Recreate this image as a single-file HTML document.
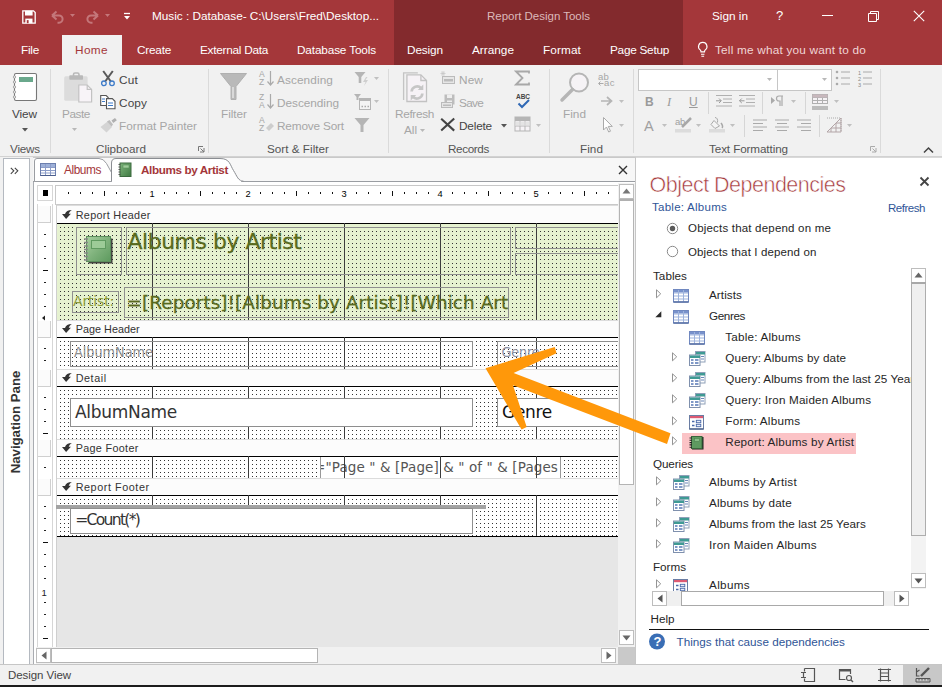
<!DOCTYPE html><html><head><meta charset="utf-8"><title>Access</title><style>
html,body{margin:0;padding:0}
body{width:942px;height:687px;position:relative;overflow:hidden;background:#fff;font-family:"Liberation Sans",sans-serif}
body div,body span,body svg{position:absolute;white-space:nowrap;display:block}
</style></head><body>
<div style="left:0px;top:0px;width:942px;height:65px;background:#a4373a;"></div>
<div style="left:394px;top:0px;width:289px;height:65px;background:#832a2d;"></div>
<div style="left:62px;top:35px;width:60px;height:30px;background:#f1f1f1;"></div>
<svg style="left:22px;top:10px;" width="14" height="14" viewBox="0 0 14 14"><path d="M.8 .8h10.700l1.700 1.700v10.700H.8z" fill="none" stroke="#fff" stroke-width="1.300"/><rect x="3" y=".8" width="7.600" height="4.700" fill="#fff"/><rect x="3.300" y="8.600" width="7.200" height="4.600" fill="#fff"/><rect x="4.800" y="10.100" width="1.800" height="3.100" fill="#a4373a"/></svg>
<svg style="left:50px;top:8.5px;" width="15" height="15" viewBox="0 0 15 15"><path d="M2 6.5 L6.5 2.5 M2 6.5 L6.5 10.5 M2.3 6.5 H9 A3.6 3.6 0 0 1 9 13.7 H7.5" fill="none" stroke="#c4777a" stroke-width="2"/></svg>
<svg style="left:85px;top:8.5px;" width="15" height="15" viewBox="0 0 15 15"><path d="M13 6.5 L8.5 2.5 M13 6.5 L8.5 10.5 M12.7 6.5 H6 A3.6 3.6 0 0 0 6 13.7 H7.5" fill="none" stroke="#c4777a" stroke-width="2"/></svg>
<svg style="left:70px;top:14px;" width="6" height="4" viewBox="0 0 6 4"><path d="M0 0h5L2.5 3z" fill="#c4777a"/></svg>
<svg style="left:105px;top:14px;" width="6" height="4" viewBox="0 0 6 4"><path d="M0 0h5L2.5 3z" fill="#c4777a"/></svg>
<svg style="left:123px;top:12px;" width="8" height="8" viewBox="0 0 8 8"><path d="M1 1.5h6" stroke="#fff" stroke-width="1.3"/><path d="M1 4h6L4 7.5z" fill="#fff"/></svg>
<span style="left:152px;top:7.41px;font:400 11.8px/18px 'Liberation Sans',sans-serif;color:#fff;letter-spacing:-0.029px;">Music : Database- C:\Users\Fred\Desktop...</span>
<span style="left:487px;top:8.02px;font:400 11.5px/17px 'Liberation Sans',sans-serif;color:#dcb9ba;letter-spacing:-0.018px;">Report Design Tools</span>
<span style="left:712px;top:7.41px;font:400 11.8px/18px 'Liberation Sans',sans-serif;color:#fff;letter-spacing:-0.011px;">Sign in</span>
<span style="left:776px;top:6.00px;font:400 13px/20px 'Liberation Sans',sans-serif;color:#fff;">?</span>
<svg style="left:822px;top:9px;" width="12" height="12" viewBox="0 0 12 12"><path d="M0 6.5h11" stroke="#fff" stroke-width="1"/></svg>
<svg style="left:867.5px;top:9.5px;" width="12" height="12" viewBox="0 0 12 12"><path d="M0.5 3.5h8v8h-8z M2.5 3.5v-2h8v8h-2" fill="none" stroke="#fff" stroke-width="1"/></svg>
<svg style="left:913px;top:9.5px;" width="12" height="12" viewBox="0 0 12 12"><path d="M.8 .8l10.400 10.400M11.200 .8L.8 11.200" stroke="#fff" stroke-width="1.100"/></svg>
<span style="left:21px;top:40.91px;font:400 11.8px/18px 'Liberation Sans',sans-serif;color:#fff;letter-spacing:-0.254px;">File</span>
<span style="left:75px;top:40.91px;font:400 11.8px/18px 'Liberation Sans',sans-serif;color:#a4373a;letter-spacing:0.381px;">Home</span>
<span style="left:137px;top:40.91px;font:400 11.8px/18px 'Liberation Sans',sans-serif;color:#fff;letter-spacing:-0.236px;">Create</span>
<span style="left:200px;top:40.91px;font:400 11.8px/18px 'Liberation Sans',sans-serif;color:#fff;letter-spacing:-0.269px;">External Data</span>
<span style="left:297px;top:40.91px;font:400 11.8px/18px 'Liberation Sans',sans-serif;color:#fff;letter-spacing:-0.152px;">Database Tools</span>
<span style="left:407px;top:40.91px;font:400 11.8px/18px 'Liberation Sans',sans-serif;color:#fff;letter-spacing:-0.122px;">Design</span>
<span style="left:472px;top:40.91px;font:400 11.8px/18px 'Liberation Sans',sans-serif;color:#fff;letter-spacing:0.003px;">Arrange</span>
<span style="left:543px;top:40.91px;font:400 11.8px/18px 'Liberation Sans',sans-serif;color:#fff;letter-spacing:0.105px;">Format</span>
<span style="left:610px;top:40.91px;font:400 11.8px/18px 'Liberation Sans',sans-serif;color:#fff;letter-spacing:-0.267px;">Page Setup</span>
<svg style="left:697px;top:41px;" width="12" height="18" viewBox="0 0 12 18"><path transform="scale(1.150)" d="M5 1.2a3.6 3.6 0 0 1 2.2 6.5c-.5.5-.7 1-.7 1.8h-3c0-.8-.2-1.3-.7-1.8A3.6 3.6 0 0 1 5 1.200z M3.5 11.500h3 M3.800 13.300h2.400" fill="none" stroke="#fff" stroke-width="1"/></svg>
<span style="left:715px;top:40.91px;font:400 11.8px/18px 'Liberation Sans',sans-serif;color:#f0d5d6;letter-spacing:0.200px;">Tell me what you want to do</span>
<div style="left:0px;top:65px;width:942px;height:91px;background:#f1f1f1;"></div>
<div style="left:0px;top:156px;width:942px;height:1px;background:#d2d2d2;"></div>
<div style="left:50px;top:69px;width:1px;height:84px;background:#dadada;"></div>
<div style="left:208px;top:69px;width:1px;height:84px;background:#dadada;"></div>
<div style="left:388px;top:69px;width:1px;height:84px;background:#dadada;"></div>
<div style="left:549px;top:69px;width:1px;height:84px;background:#dadada;"></div>
<div style="left:633px;top:69px;width:1px;height:84px;background:#dadada;"></div>
<div style="left:880px;top:69px;width:1px;height:84px;background:#dadada;"></div>
<span style="left:10px;top:140.25px;font:400 11.7px/18px 'Liberation Sans',sans-serif;color:#555;letter-spacing:-0.200px;">Views</span>
<span style="left:96px;top:140.25px;font:400 11.7px/18px 'Liberation Sans',sans-serif;color:#555;letter-spacing:-0.009px;">Clipboard</span>
<span style="left:267px;top:140.25px;font:400 11.7px/18px 'Liberation Sans',sans-serif;color:#555;letter-spacing:0.019px;">Sort &amp; Filter</span>
<span style="left:448px;top:140.25px;font:400 11.7px/18px 'Liberation Sans',sans-serif;color:#555;letter-spacing:-0.367px;">Records</span>
<span style="left:580px;top:140.25px;font:400 11.7px/18px 'Liberation Sans',sans-serif;color:#555;letter-spacing:0.060px;">Find</span>
<span style="left:709px;top:140.25px;font:400 11.7px/18px 'Liberation Sans',sans-serif;color:#555;letter-spacing:-0.108px;">Text Formatting</span>
<svg style="left:12px;top:72px;" width="26" height="30" viewBox="0 0 26 30"><rect x="2.500" y="1.500" width="22" height="27" rx="1.500" fill="#fff" stroke="#777" stroke-width="1.100"/><rect x="7" y="5" width="14" height="5" fill="#6aa88c"/><g fill="#f1f1f1" stroke="#8a8a8a" stroke-width=".7"><circle cx="2.500" cy="5" r="1.200"/><circle cx="2.500" cy="10" r="1.200"/><circle cx="2.500" cy="15" r="1.200"/><circle cx="2.500" cy="20" r="1.200"/><circle cx="2.500" cy="25" r="1.200"/></g></svg>
<span style="left:12px;top:105.21px;font:400 11.8px/18px 'Liberation Sans',sans-serif;color:#444;letter-spacing:-0.091px;">View</span>
<svg style="left:21.5px;top:128px;" width="7" height="4" viewBox="0 0 7 4"><path d="M0 0h6L3 3.500z" fill="#555"/></svg>
<svg style="left:62px;top:72px;" width="32" height="32" viewBox="0 0 32 32"><rect x="2.200" y="4.200" width="23.400" height="24.500" rx="1.500" fill="#dcdcdc"/><rect x="7.300" y="3.200" width="13.700" height="4.600" rx=".8" fill="#b9b9b9"/><path d="M11.500 4V2.500q0-1.500 1.500-1.500h2.500q1.500 0 1.500 1.500V4" fill="none" stroke="#b9b9b9" stroke-width="1.600"/><path d="M16.800 13h8.400l4.400 4.400v12.600h-12.800z" fill="#f8f4f8" stroke="#c2c2c2" stroke-width="1.200"/><path d="M25.200 13v4.400h4.400" fill="none" stroke="#c2c2c2" stroke-width="1.200"/></svg>
<span style="left:62px;top:105.21px;font:400 11.8px/18px 'Liberation Sans',sans-serif;color:#a6a6a6;letter-spacing:-0.435px;">Paste</span>
<svg style="left:72px;top:128px;" width="6" height="4" viewBox="0 0 6 4"><path d="M0 0h5L2.500 3z" fill="#b8b8b8"/></svg>
<svg style="left:100px;top:70px;" width="16" height="17" viewBox="0 0 16 17"><path d="M3.200 1l8 11M12.800 1l-8 11" stroke="#595959" stroke-width="2" fill="none"/><circle cx="3.900" cy="13.300" r="2.300" fill="#f1f1f1" stroke="#3d7bc9" stroke-width="1.300"/><circle cx="12" cy="13.300" r="2.300" fill="#f1f1f1" stroke="#3d7bc9" stroke-width="1.300"/></svg>
<span style="left:119px;top:71.21px;font:400 11.8px/18px 'Liberation Sans',sans-serif;color:#444;letter-spacing:0.212px;">Cut</span>
<svg style="left:100px;top:93px;" width="16" height="17" viewBox="0 0 16 17"><path d="M.7 2.500h5.500l2 2v8H.7z" fill="#fff" stroke="#555" stroke-width="1.100"/><path d="M6.500 5.600h5.800l2.700 2.700v7.500H6.500z" fill="#fff" stroke="#555" stroke-width="1.100"/><path d="M2 6h3M2 8.500h3M8 10h5M8 12.500h5" stroke="#3d7bc9" stroke-width="1.100"/></svg>
<span style="left:119px;top:94.21px;font:400 11.8px/18px 'Liberation Sans',sans-serif;color:#444;letter-spacing:0.113px;">Copy</span>
<svg style="left:100px;top:117px;" width="17" height="16" viewBox="0 0 17 16"><path d="M0.500 10l7-5.500 4.500 5.500-5.500 5.500z" fill="#d4d4d4"/><path d="M7 4.500l2.500-1.500 3.500 4.500-1.500 2z" fill="#bdbdbd"/><path d="M11.500 3.500l3.500-2.500 1.800 2.300-3.500 2.700z" fill="#b0b0b0"/></svg>
<span style="left:119px;top:116.91px;font:400 11.8px/18px 'Liberation Sans',sans-serif;color:#a6a6a6;letter-spacing:-0.003px;">Format Painter</span>
<svg style="left:197.5px;top:146px;" width="7" height="7" viewBox="0 0 7 7"><path d="M0.500 5V.5H5M6 2v4H2M2.500 2.500L6 6" fill="none" stroke="#777" stroke-width="1"/></svg>
<svg style="left:870px;top:146px;" width="7" height="7" viewBox="0 0 7 7"><path d="M0.500 5V.5H5M6 2v4H2M2.500 2.500L6 6" fill="none" stroke="#aaa" stroke-width="1"/></svg>
<svg style="left:219px;top:72px;" width="30" height="30" viewBox="0 0 30 30"><path d="M1.500 1.500h26l-10.500 13v13h-5v-13z" fill="#b9b9b9" stroke="#b0b0b0"/><path d="M14 15v11" stroke="#e4e4e4" stroke-width="1.500"/></svg>
<span style="left:221px;top:105.21px;font:400 11.8px/18px 'Liberation Sans',sans-serif;color:#a6a6a6;letter-spacing:-0.037px;">Filter</span>
<span style="left:259px;top:67.55px;font:400 8.5px/13px 'Liberation Sans',sans-serif;color:#a6a6a6;">A</span>
<span style="left:259px;top:75.55px;font:400 8.5px/13px 'Liberation Sans',sans-serif;color:#a6a6a6;">Z</span>
<svg style="left:267px;top:70px;" width="7" height="17" viewBox="0 0 7 17"><path d="M3.500 1v14M0.500 11.500l3 3.500 3-3.500" fill="none" stroke="#aaa" stroke-width="1.200"/></svg>
<span style="left:259px;top:90.55px;font:400 8.5px/13px 'Liberation Sans',sans-serif;color:#a6a6a6;">Z</span>
<span style="left:259px;top:98.55px;font:400 8.5px/13px 'Liberation Sans',sans-serif;color:#a6a6a6;">A</span>
<svg style="left:267px;top:93px;" width="7" height="17" viewBox="0 0 7 17"><path d="M3.500 1v14M0.500 11.500l3 3.500 3-3.500" fill="none" stroke="#aaa" stroke-width="1.200"/></svg>
<span style="left:259px;top:113.55px;font:400 8.5px/13px 'Liberation Sans',sans-serif;color:#a6a6a6;">A</span>
<span style="left:259px;top:121.55px;font:400 8.5px/13px 'Liberation Sans',sans-serif;color:#a6a6a6;">Z</span>
<svg style="left:265px;top:121px;" width="10" height="10" viewBox="0 0 10 10"><path d="M1 7l5-5 3 3-5 5z" fill="#cdcdcd"/></svg>
<span style="left:277px;top:70.91px;font:400 11.8px/18px 'Liberation Sans',sans-serif;color:#a6a6a6;letter-spacing:0.099px;">Ascending</span>
<span style="left:277px;top:93.91px;font:400 11.8px/18px 'Liberation Sans',sans-serif;color:#a6a6a6;letter-spacing:-0.032px;">Descending</span>
<span style="left:277px;top:116.91px;font:400 11.8px/18px 'Liberation Sans',sans-serif;color:#a6a6a6;letter-spacing:-0.169px;">Remove Sort</span>
<svg style="left:354px;top:71px;" width="20" height="16" viewBox="0 0 20 16"><path d="M0.500 1h11l-4.200 5v6h-2.600v-6z" fill="#b5b5b5"/><path d="M12 6l-3 5h2.500l-1.500 4 4-6h-2.500l2-3z" fill="#cfcfcf"/></svg>
<svg style="left:374px;top:77px;" width="6" height="4" viewBox="0 0 6 4"><path d="M0 0h5L2.500 3z" fill="#c0c0c0"/></svg>
<svg style="left:354px;top:93px;" width="20" height="18" viewBox="0 0 20 18"><path d="M0 1h7l-2.500 3v3h-2v-3z" fill="#b5b5b5"/><rect x="5.500" y="5.500" width="11" height="11" fill="#f4f4f4" stroke="#b5b5b5"/><rect x="5" y="5" width="12" height="3" fill="#b5b5b5"/><path d="M7.500 13.500h1.500M10.500 13.500h1.500M13.500 13.500h1.500" stroke="#aaa" stroke-width="1.500"/></svg>
<svg style="left:374px;top:100px;" width="6" height="4" viewBox="0 0 6 4"><path d="M0 0h5L2.500 3z" fill="#c0c0c0"/></svg>
<svg style="left:354px;top:117px;" width="17" height="16" viewBox="0 0 17 16"><path d="M0.500 1h15l-6 7v7h-3v-7z" fill="#b5b5b5"/></svg>
<svg style="left:400px;top:71px;" width="30" height="32" viewBox="0 0 30 32"><path d="M3.600 29V1.800h14.200" fill="none" stroke="#c4c4c4" stroke-width="1.300"/><path d="M6.900 3.900h14l5.600 5.600v21H6.900z" fill="#f6f2f6" stroke="#c2c2c2" stroke-width="1.300"/><path d="M20.900 3.900v5.600h5.600" fill="none" stroke="#c2c2c2" stroke-width="1.300"/><path d="M11.600 20.500a5.500 5.500 0 0 1 9.600-3.200M22.400 22.500a5.500 5.500 0 0 1-9.600 3.200" fill="none" stroke="#c6c6c6" stroke-width="2.600"/><path d="M23.300 13.500v5.500h-5.500zM10.700 29.500V24h5.500z" fill="#c6c6c6"/></svg>
<span style="left:395px;top:105.21px;font:400 11.8px/18px 'Liberation Sans',sans-serif;color:#a6a6a6;letter-spacing:-0.331px;">Refresh</span>
<span style="left:404px;top:120.91px;font:400 11.8px/18px 'Liberation Sans',sans-serif;color:#a6a6a6;letter-spacing:-0.038px;">All</span>
<svg style="left:420px;top:129px;" width="6" height="4" viewBox="0 0 6 4"><path d="M0 0h5L2.500 3z" fill="#b8b8b8"/></svg>
<svg style="left:440px;top:71px;" width="16" height="14" viewBox="0 0 16 14"><rect x="2.500" y="5.500" width="12" height="7" fill="#e6e6e6" stroke="#bbb"/><rect x="4" y="8" width="9" height="2.500" fill="#bbb"/><path d="M3 0v5M0.500 2.500h5M1.200 .8l3.600 3.400M4.800 .8L1.200 4.200" stroke="#c8c8c8" stroke-width=".8"/></svg>
<span style="left:459px;top:70.91px;font:400 11.8px/18px 'Liberation Sans',sans-serif;color:#a6a6a6;letter-spacing:0.131px;">New</span>
<svg style="left:440px;top:93px;" width="16" height="16" viewBox="0 0 16 16"><rect x="4.500" y="1.500" width="10" height="10" fill="#bdbdbd"/><rect x="7" y="1.500" width="5" height="3.500" fill="#eee"/><rect x="7" y="7.500" width="5" height="4" fill="#eee"/><rect x="1.500" y="9.500" width="11" height="5" fill="#e6e6e6" stroke="#bbb"/><rect x="3" y="11.500" width="8" height="1.500" fill="#bbb"/></svg>
<span style="left:459px;top:93.91px;font:400 11.8px/18px 'Liberation Sans',sans-serif;color:#a6a6a6;letter-spacing:-0.724px;">Save</span>
<svg style="left:440px;top:117px;" width="16" height="15" viewBox="0 0 16 15"><path d="M1.200 1.800l13 11.800M14.200 1.500L1.200 13.500" stroke="#444" stroke-width="2.100"/></svg>
<span style="left:459px;top:116.91px;font:400 11.8px/18px 'Liberation Sans',sans-serif;color:#444;letter-spacing:-0.185px;">Delete</span>
<svg style="left:501px;top:124px;" width="7" height="4" viewBox="0 0 7 4"><path d="M0 0h6L3 3.500z" fill="#555"/></svg>
<svg style="left:514px;top:70px;" width="17" height="17" viewBox="0 0 17 17"><path d="M15 3.500V1.500H2l6.500 6.500L2 14.500h13v-2" fill="none" stroke="#a8a8a8" stroke-width="1.800"/></svg>
<span style="left:516px;top:91.75px;font:700 6.5px/10px 'Liberation Sans',sans-serif;color:#444;letter-spacing:-0.027px;">ABC</span>
<svg style="left:517px;top:99px;" width="14" height="10" viewBox="0 0 14 10"><path d="M1.500 4.500l3.500 3.500 7-7" fill="none" stroke="#2f68b5" stroke-width="2"/></svg>
<svg style="left:514px;top:116px;" width="18" height="17" viewBox="0 0 18 17"><rect x="1" y="1" width="15" height="14" fill="#f6f3f6" stroke="#b5b5b5"/><rect x="1" y="1" width="15" height="4" fill="#b5b5b5"/><path d="M1 10h15M6 5v10M11 5v10" stroke="#b5b5b5"/><rect x="1" y="5.500" width="15" height="4.500" fill="#ddd" opacity=".7"/></svg>
<svg style="left:536px;top:124px;" width="6" height="4" viewBox="0 0 6 4"><path d="M0 0h5L2.500 3z" fill="#c0c0c0"/></svg>
<svg style="left:559px;top:71px;" width="32" height="32" viewBox="0 0 32 32"><circle cx="20" cy="11.500" r="9" fill="#f6f3f6" stroke="#b5b5b5" stroke-width="2"/><path d="M13.500 18.500L3 29" stroke="#b5b5b5" stroke-width="3.500" stroke-linecap="round"/></svg>
<span style="left:563px;top:105.21px;font:400 11.8px/18px 'Liberation Sans',sans-serif;color:#a6a6a6;letter-spacing:0.011px;">Find</span>
<span style="left:598px;top:69.71px;font:400 9.5px/14px 'Liberation Sans',sans-serif;color:#a6a6a6;letter-spacing:0.217px;">ab</span>
<span style="left:604px;top:76.21px;font:400 9.5px/14px 'Liberation Sans',sans-serif;color:#a6a6a6;letter-spacing:0.484px;">ac</span>
<svg style="left:598px;top:81px;" width="6" height="6" viewBox="0 0 6 6"><path d="M5.500 2.500H1M2.500 .5L.5 2.500l2 2" fill="none" stroke="#aaa" stroke-width="1"/></svg>
<svg style="left:600px;top:96px;" width="14" height="10" viewBox="0 0 14 10"><path d="M1 5h10M7 1l4.500 4L7 9" fill="none" stroke="#b5b5b5" stroke-width="1.700"/></svg>
<svg style="left:619px;top:100px;" width="6" height="4" viewBox="0 0 6 4"><path d="M0 0h5L2.500 3z" fill="#c0c0c0"/></svg>
<svg style="left:602px;top:116px;" width="12" height="18" viewBox="0 0 12 18"><path d="M1.500 1.500v12.500l3-3 2.200 5 1.800-.8-2.200-4.800h4z" fill="#fff" stroke="#aaa" stroke-width="1"/></svg>
<svg style="left:619px;top:124px;" width="6" height="4" viewBox="0 0 6 4"><path d="M0 0h5L2.500 3z" fill="#c0c0c0"/></svg>
<div style="left:638px;top:69px;width:138px;height:20px;border:1px solid #c6c6c6;background:#fff;"></div>
<div style="left:777px;top:69px;width:53px;height:20px;border:1px solid #c6c6c6;background:#fff;"></div>
<svg style="left:767px;top:78px;" width="6" height="4" viewBox="0 0 6 4"><path d="M0 0h5L2.500 3z" fill="#b8b8b8"/></svg>
<svg style="left:822px;top:78px;" width="6" height="4" viewBox="0 0 6 4"><path d="M0 0h5L2.500 3z" fill="#b8b8b8"/></svg>
<svg style="left:835px;top:69px;" width="16" height="18" viewBox="0 0 16 18"><circle cx="2" cy="3" r="1.300" fill="#aaa"/><circle cx="2" cy="9" r="1.300" fill="#aaa"/><circle cx="2" cy="15" r="1.300" fill="#aaa"/><path d="M6 3h9M6 9h9M6 15h9" stroke="#aaa" stroke-width="1"/></svg>
<svg style="left:857px;top:69px;" width="16" height="18" viewBox="0 0 16 18"><path d="M6 3h9M6 9h9M6 15h9" stroke="#aaa" stroke-width="1"/></svg>
<span style="left:858px;top:68.59px;font:400 5.5px/8px 'Liberation Sans',sans-serif;color:#888;">1</span>
<span style="left:858px;top:74.59px;font:400 5.5px/8px 'Liberation Sans',sans-serif;color:#888;">2</span>
<span style="left:858px;top:80.59px;font:400 5.5px/8px 'Liberation Sans',sans-serif;color:#888;">3</span>
<span style="left:645px;top:93.34px;font:700 12px/18px 'Liberation Sans',sans-serif;color:#9a9a9a;">B</span>
<span style="left:667px;top:92.67px;font:400 12.5px/19px 'Liberation Sans',sans-serif;color:#9a9a9a;font-style:italic;font-family:'Liberation Serif',serif;">I</span>
<span style="left:689px;top:93.34px;font:400 12px/18px 'Liberation Sans',sans-serif;color:#9a9a9a;text-decoration:underline;">U</span>
<div style="left:708px;top:92px;width:1px;height:22px;background:#d6d6d6;"></div>
<div style="left:762px;top:92px;width:1px;height:22px;background:#d6d6d6;"></div>
<div style="left:805px;top:92px;width:1px;height:22px;background:#d6d6d6;"></div>
<div style="left:744px;top:115px;width:1px;height:22px;background:#d6d6d6;"></div>
<div style="left:819px;top:115px;width:1px;height:22px;background:#d6d6d6;"></div>
<svg style="left:716px;top:94px;" width="16" height="14" viewBox="0 0 16 14"><path d="M0 1.500h16M7 5h9M7 8.500h9M0 12h16" stroke="#b0b0b0"/><path d="M0 6.800h5M3 4.500l2.300 2.300L3 9" fill="none" stroke="#999" stroke-width="1"/></svg>
<svg style="left:739px;top:94px;" width="16" height="14" viewBox="0 0 16 14"><path d="M0 1.500h16M7 5h9M7 8.500h9M0 12h16" stroke="#b0b0b0"/><path d="M.5 6.800h5M2.800 4.500L.5 6.800 2.800 9" fill="none" stroke="#999" stroke-width="1"/></svg>
<svg style="left:770px;top:95px;" width="15" height="12" viewBox="0 0 15 12"><path d="M1 2l4 3.500L1 9z" fill="#aaa"/><path d="M13 1H9a2.500 2.500 0 0 0 0 5h1v5M12 1v10" fill="none" stroke="#aaa" stroke-width="1.200"/></svg>
<svg style="left:791px;top:100px;" width="6" height="4" viewBox="0 0 6 4"><path d="M0 0h5L2.500 3z" fill="#c0c0c0"/></svg>
<svg style="left:811px;top:93px;" width="18" height="18" viewBox="0 0 18 18"><rect x="1.500" y="1.500" width="15" height="9" fill="#f6f3f6" stroke="#b0b0b0"/><path d="M1.500 4.500h15M1.500 7.500h15M6.500 1.500v9M11.500 1.500v9" stroke="#b0b0b0"/><rect x="1.500" y="1.500" width="15" height="3" fill="#c8b8bd"/><rect x="1" y="13" width="16" height="4" fill="#bcbcbc"/></svg>
<svg style="left:834px;top:100px;" width="6" height="4" viewBox="0 0 6 4"><path d="M0 0h5L2.500 3z" fill="#c0c0c0"/></svg>
<span style="left:644px;top:114.98px;font:400 14.5px/22px 'Liberation Sans',sans-serif;color:#a0a0a0;">A</span>
<svg style="left:662px;top:124px;" width="6" height="4" viewBox="0 0 6 4"><path d="M0 0h5L2.500 3z" fill="#c0c0c0"/></svg>
<span style="left:675px;top:114.71px;font:400 9.5px/14px 'Liberation Sans',sans-serif;color:#a0a0a0;letter-spacing:-0.283px;">ab</span>
<svg style="left:675px;top:116px;" width="18" height="18" viewBox="0 0 18 18"><path d="M7 11l9-9" stroke="#a8a8a8" stroke-width="2.500"/><rect x="0" y="13" width="16" height="3.500" fill="#dcdcdc"/></svg>
<svg style="left:696px;top:124px;" width="6" height="4" viewBox="0 0 6 4"><path d="M0 0h5L2.500 3z" fill="#c0c0c0"/></svg>
<svg style="left:709px;top:116px;" width="18" height="18" viewBox="0 0 18 18"><path d="M5 4.500l5.500 5.500-4.500 2.500-4-4z" fill="#f4f4f4" stroke="#a8a8a8"/><path d="M6 1.500c2 0 3 2 2.500 5" fill="none" stroke="#a8a8a8"/><path d="M12 7c1.500 2 2.500 3.500 1 5" fill="none" stroke="#a8a8a8" stroke-width="1.500"/><rect x="0" y="13" width="16" height="3.500" fill="#dcdcdc"/></svg>
<svg style="left:730px;top:124px;" width="6" height="4" viewBox="0 0 6 4"><path d="M0 0h5L2.500 3z" fill="#c0c0c0"/></svg>
<svg style="left:753px;top:119px;" width="15" height="13" viewBox="0 0 15 13"><path d="M0 1h14M0 4.500h10M0 8h14M0 11.500h10" stroke="#aaa"/></svg>
<svg style="left:775px;top:119px;" width="15" height="13" viewBox="0 0 15 13"><path d="M0 1h14M2 4.500h10M0 8h14M2 11.500h10" stroke="#aaa"/></svg>
<svg style="left:797px;top:119px;" width="15" height="13" viewBox="0 0 15 13"><path d="M0 1h14M4 4.500h10M0 8h14M4 11.500h10" stroke="#aaa"/></svg>
<svg style="left:826px;top:117px;" width="17" height="17" viewBox="0 0 17 17"><path d="M1 1h14v14" fill="none" stroke="#aaa" stroke-dasharray="1 1"/><path d="M1 15h14M15 1L1 15M5 15v-4M10 15V6M15 15V1M5 11h10M10 6h5" fill="none" stroke="#b3a5a7" stroke-width="1"/></svg>
<svg style="left:847px;top:124px;" width="6" height="4" viewBox="0 0 6 4"><path d="M0 0h5L2.500 3z" fill="#c0c0c0"/></svg>
<svg style="left:923px;top:146px;" width="11" height="8" viewBox="0 0 11 8"><path d="M1 6.500l4.500-4.500 4.500 4.500" fill="none" stroke="#444" stroke-width="1.500"/></svg>
<div style="left:0px;top:157px;width:942px;height:507px;background:#f1f1f1;"></div>
<div style="left:3px;top:158px;width:27px;height:506px;background:#fff;border-left:1px solid #b4b9c0;border-right:1px solid #b4b9c0;border-top:1px solid #b4b9c0;width:25px;"></div>
<div style="left:33px;top:158px;width:1px;height:506px;background:#a9acb1;"></div>
<svg style="left:10px;top:167px;" width="9" height="8" viewBox="0 0 9 8"><path d="M.8 .8l3 3-3 3M4.800 .8l3 3-3 3" fill="none" stroke="#444" stroke-width="1.100"/></svg>
<span style="left:16px;top:422px;font:700 13.200px/14px 'Liberation Sans',sans-serif;color:#333;letter-spacing:0px;transform:translate(-50%,-50%) rotate(-90deg);">Navigation Pane</span>
<div style="left:33px;top:158px;width:603px;height:24px;background:#f7f7f7;"></div>
<div style="left:33px;top:157px;width:603px;height:1px;background:#c9c9c9;"></div>
<div style="left:33px;top:181px;width:603px;height:1px;background:#9a9da2;"></div>
<div style="left:635px;top:158px;width:1px;height:506px;background:#c6c6c6;"></div>
<div style="left:34px;top:182px;width:601px;height:482px;background:#fff;"></div>
<svg style="left:34px;top:158px;" width="212" height="24" viewBox="0 0 212 24"><path d="M.5 23.500V3q0-2.500 2.500-2.500H65q4.500 0 7.500 5l5 9v9z" fill="#fff" stroke="#9a9da2"/><path d="M77.500 23.500V5q0-4.500 4.500-4.500H186C196 .5 196 7 199.500 12.500S204 23 209.500 23.200" fill="#fff" stroke="#8a8d92"/><path d="M78 23.500h129" stroke="#fff" stroke-width="1.500"/></svg>
<svg style="left:40px;top:163px;" width="16" height="14" viewBox="0 0 16 14"><rect x=".5" y=".5" width="15" height="12" fill="#fff" stroke="#6c7fae"/><rect x="1" y="1" width="14" height="3" fill="#9db0d8"/><path d="M1 4.500h14M1 7.500h14M1 10h14M5.500 1v11M10.500 1v11" stroke="#8c9dc8" stroke-width="1"/><path d="M.5 12.500h15" stroke="#4a5d8c"/></svg>
<span style="left:64px;top:161.08px;font:400 11.9px/18px 'Liberation Sans',sans-serif;color:#a4373a;letter-spacing:-0.447px;">Albums</span>
<svg style="left:117px;top:162px;" width="15" height="16" viewBox="0 0 15 16"><defs><linearGradient id="gb" x1="0" y1="0" x2="1" y2="1"><stop offset="0" stop-color="#7fb57c"/><stop offset="1" stop-color="#3f7a43"/></linearGradient></defs><rect x="3" y="1" width="11" height="13.500" fill="url(#gb)" stroke="#3c6a3f" stroke-width="1"/><rect x="6" y="3" width="6" height="3" fill="#9fcc9a" stroke="#5a915c" stroke-width=".6"/><path d="M1.500 2.500h2M1.500 5h2M1.500 7.500h2M1.500 10h2M1.500 12.500h2" stroke="#555" stroke-width="1"/></svg>
<span style="left:141px;top:161.05px;font:700 11.7px/18px 'Liberation Sans',sans-serif;color:#a4373a;letter-spacing:-0.386px;">Albums by Artist</span>
<svg style="left:618px;top:165px;" width="10" height="10" viewBox="0 0 10 10"><path d="M1 1l8 8M9 1L1 9" stroke="#333" stroke-width="1.400"/></svg>
<div style="left:37px;top:185px;width:14px;height:14px;border:1px solid #d6d6d6;background:#fff;"></div>
<div style="left:43px;top:190px;width:5px;height:6px;background:#000;"></div>
<div style="left:55px;top:185px;width:563px;height:20px;background:#fff;border-top:1px solid #c8c8c8;border-bottom:1px solid #c8c8c8;height:18px;"></div>
<div style="left:55px;top:185px;width:1px;height:20px;background:#c8c8c8;"></div>
<div style="left:68px;top:192px;width:1px;height:2px;background:#111;"></div>
<div style="left:80px;top:192px;width:1px;height:2px;background:#111;"></div>
<div style="left:92px;top:192px;width:1px;height:2px;background:#111;"></div>
<div style="left:104px;top:191px;width:1px;height:5px;background:#111;"></div>
<div style="left:116px;top:192px;width:1px;height:2px;background:#111;"></div>
<div style="left:128px;top:192px;width:1px;height:2px;background:#111;"></div>
<div style="left:140px;top:192px;width:1px;height:2px;background:#111;"></div>
<span style="left:149.6px;top:187.08px;font:400 9.3px/14px 'Liberation Sans',sans-serif;color:#000;">1</span>
<div style="left:164px;top:192px;width:1px;height:2px;background:#111;"></div>
<div style="left:176px;top:192px;width:1px;height:2px;background:#111;"></div>
<div style="left:188px;top:192px;width:1px;height:2px;background:#111;"></div>
<div style="left:200px;top:191px;width:1px;height:5px;background:#111;"></div>
<div style="left:212px;top:192px;width:1px;height:2px;background:#111;"></div>
<div style="left:224px;top:192px;width:1px;height:2px;background:#111;"></div>
<div style="left:236px;top:192px;width:1px;height:2px;background:#111;"></div>
<span style="left:245.6px;top:187.08px;font:400 9.3px/14px 'Liberation Sans',sans-serif;color:#000;">2</span>
<div style="left:260px;top:192px;width:1px;height:2px;background:#111;"></div>
<div style="left:272px;top:192px;width:1px;height:2px;background:#111;"></div>
<div style="left:284px;top:192px;width:1px;height:2px;background:#111;"></div>
<div style="left:296px;top:191px;width:1px;height:5px;background:#111;"></div>
<div style="left:308px;top:192px;width:1px;height:2px;background:#111;"></div>
<div style="left:320px;top:192px;width:1px;height:2px;background:#111;"></div>
<div style="left:332px;top:192px;width:1px;height:2px;background:#111;"></div>
<span style="left:341.59999999999997px;top:187.08px;font:400 9.3px/14px 'Liberation Sans',sans-serif;color:#000;">3</span>
<div style="left:356px;top:192px;width:1px;height:2px;background:#111;"></div>
<div style="left:368px;top:192px;width:1px;height:2px;background:#111;"></div>
<div style="left:380px;top:192px;width:1px;height:2px;background:#111;"></div>
<div style="left:392px;top:191px;width:1px;height:5px;background:#111;"></div>
<div style="left:404px;top:192px;width:1px;height:2px;background:#111;"></div>
<div style="left:416px;top:192px;width:1px;height:2px;background:#111;"></div>
<div style="left:428px;top:192px;width:1px;height:2px;background:#111;"></div>
<span style="left:437.59999999999997px;top:187.08px;font:400 9.3px/14px 'Liberation Sans',sans-serif;color:#000;">4</span>
<div style="left:452px;top:192px;width:1px;height:2px;background:#111;"></div>
<div style="left:464px;top:192px;width:1px;height:2px;background:#111;"></div>
<div style="left:476px;top:192px;width:1px;height:2px;background:#111;"></div>
<div style="left:488px;top:191px;width:1px;height:5px;background:#111;"></div>
<div style="left:500px;top:192px;width:1px;height:2px;background:#111;"></div>
<div style="left:512px;top:192px;width:1px;height:2px;background:#111;"></div>
<div style="left:524px;top:192px;width:1px;height:2px;background:#111;"></div>
<span style="left:533.6px;top:187.08px;font:400 9.3px/14px 'Liberation Sans',sans-serif;color:#000;">5</span>
<div style="left:548px;top:192px;width:1px;height:2px;background:#111;"></div>
<div style="left:560px;top:192px;width:1px;height:2px;background:#111;"></div>
<div style="left:572px;top:192px;width:1px;height:2px;background:#111;"></div>
<div style="left:584px;top:191px;width:1px;height:5px;background:#111;"></div>
<div style="left:596px;top:192px;width:1px;height:2px;background:#111;"></div>
<div style="left:608px;top:192px;width:1px;height:2px;background:#111;"></div>
<div style="left:37px;top:204px;width:16px;height:443px;background:#fff;border-left:1px solid #d6d6d6;border-right:1px solid #d6d6d6;width:14px;"></div>
<div style="left:56px;top:204px;width:1px;height:443px;background:#cfcfcf;"></div>
<div style="left:57px;top:537px;width:561px;height:110px;background:#e6e6e6;"></div>
<div style="left:57px;top:205px;width:561px;height:18px;background:#fcfcfc;"></div>
<div style="left:57px;top:205px;width:561px;height:1px;background:#dcdcdc;"></div>
<svg style="left:62px;top:210px;" width="11" height="10" viewBox="0 0 11 10"><path d="M9.900 0C6 .3 4 1.200 3 4.100H0L4.100 8.900 8.900 3.800H6.700C7.200 2.200 8.200 1 9.900 0z" fill="#333"/></svg>
<span style="left:75.7px;top:206.56px;font:400 10.8px/16px 'Liberation Sans',sans-serif;color:#333;letter-spacing:0.320px;">Report Header</span>
<div style="left:38px;top:206px;width:12px;height:16px;background:#fbfbfb;border-right:1px solid #cfcfcf;border-bottom:1px solid #cfcfcf;"></div>
<div style="left:57px;top:224px;width:561px;height:96px;background:#e6f2d0;"></div>
<div style="left:59px;top:224px;width:559px;height:96px;background:linear-gradient(90deg,#333 1px,#e6f2d0 1px) 1px 0/4px 4px;"></div>
<div style="left:59px;top:224px;width:559px;height:96px;background:linear-gradient(transparent 1px,#e6f2d0 1px) 0 3px/4px 4px;"></div>
<div style="left:57px;top:223px;width:561px;height:1px;background:#000;"></div>
<div style="left:44px;top:234px;width:2px;height:1px;background:#222;"></div>
<div style="left:44px;top:246px;width:2px;height:1px;background:#222;"></div>
<div style="left:44px;top:258px;width:2px;height:1px;background:#222;"></div>
<div style="left:43px;top:270px;width:5px;height:1px;background:#111;"></div>
<div style="left:44px;top:282px;width:2px;height:1px;background:#222;"></div>
<div style="left:44px;top:294px;width:2px;height:1px;background:#222;"></div>
<div style="left:44px;top:306px;width:2px;height:1px;background:#222;"></div>
<div style="left:57px;top:320px;width:561px;height:18px;background:#fcfcfc;"></div>
<div style="left:57px;top:320px;width:561px;height:1px;background:#dcdcdc;"></div>
<svg style="left:62px;top:324px;" width="11" height="10" viewBox="0 0 11 10"><path d="M9.900 0C6 .3 4 1.200 3 4.100H0L4.100 8.900 8.900 3.800H6.700C7.200 2.200 8.200 1 9.900 0z" fill="#333"/></svg>
<span style="left:75.7px;top:320.56px;font:400 10.8px/16px 'Liberation Sans',sans-serif;color:#333;letter-spacing:0.032px;">Page Header</span>
<div style="left:38px;top:321px;width:12px;height:16px;background:#fbfbfb;border-right:1px solid #cfcfcf;border-bottom:1px solid #cfcfcf;"></div>
<div style="left:57px;top:338px;width:561px;height:31px;background:#fff;"></div>
<div style="left:59px;top:338px;width:559px;height:31px;background:linear-gradient(90deg,#333 1px,#fff 1px) 1px 0/4px 4px;"></div>
<div style="left:59px;top:338px;width:559px;height:31px;background:linear-gradient(transparent 1px,#fff 1px) 0 3px/4px 4px;"></div>
<div style="left:57px;top:337px;width:561px;height:1px;background:#000;"></div>
<div style="left:44px;top:348px;width:2px;height:1px;background:#222;"></div>
<div style="left:44px;top:360px;width:2px;height:1px;background:#222;"></div>
<div style="left:57px;top:369px;width:561px;height:18px;background:#fcfcfc;"></div>
<div style="left:57px;top:369px;width:561px;height:1px;background:#dcdcdc;"></div>
<svg style="left:62px;top:373px;" width="11" height="10" viewBox="0 0 11 10"><path d="M9.900 0C6 .3 4 1.200 3 4.100H0L4.100 8.900 8.900 3.800H6.700C7.200 2.200 8.200 1 9.900 0z" fill="#333"/></svg>
<span style="left:75.7px;top:369.56px;font:400 10.8px/16px 'Liberation Sans',sans-serif;color:#333;letter-spacing:0.565px;">Detail</span>
<div style="left:38px;top:370px;width:12px;height:16px;background:#fbfbfb;border-right:1px solid #cfcfcf;border-bottom:1px solid #cfcfcf;"></div>
<div style="left:57px;top:387px;width:561px;height:52px;background:#fff;"></div>
<div style="left:59px;top:387px;width:559px;height:52px;background:linear-gradient(90deg,#333 1px,#fff 1px) 1px 0/4px 4px;"></div>
<div style="left:59px;top:387px;width:559px;height:52px;background:linear-gradient(transparent 1px,#fff 1px) 0 3px/4px 4px;"></div>
<div style="left:57px;top:386px;width:561px;height:1px;background:#000;"></div>
<div style="left:44px;top:397px;width:2px;height:1px;background:#222;"></div>
<div style="left:44px;top:409px;width:2px;height:1px;background:#222;"></div>
<div style="left:44px;top:421px;width:2px;height:1px;background:#222;"></div>
<div style="left:43px;top:433px;width:5px;height:1px;background:#111;"></div>
<div style="left:57px;top:439px;width:561px;height:18px;background:#fcfcfc;"></div>
<div style="left:57px;top:439px;width:561px;height:1px;background:#dcdcdc;"></div>
<svg style="left:62px;top:443px;" width="11" height="10" viewBox="0 0 11 10"><path d="M9.900 0C6 .3 4 1.200 3 4.100H0L4.100 8.900 8.900 3.800H6.700C7.200 2.200 8.200 1 9.900 0z" fill="#333"/></svg>
<span style="left:75.7px;top:439.56px;font:400 10.8px/16px 'Liberation Sans',sans-serif;color:#333;letter-spacing:0.324px;">Page Footer</span>
<div style="left:38px;top:440px;width:12px;height:16px;background:#fbfbfb;border-right:1px solid #cfcfcf;border-bottom:1px solid #cfcfcf;"></div>
<div style="left:57px;top:457px;width:561px;height:21px;background:#fff;"></div>
<div style="left:59px;top:457px;width:559px;height:21px;background:linear-gradient(90deg,#333 1px,#fff 1px) 1px 0/4px 4px;"></div>
<div style="left:59px;top:457px;width:559px;height:21px;background:linear-gradient(transparent 1px,#fff 1px) 0 3px/4px 4px;"></div>
<div style="left:57px;top:456px;width:561px;height:1px;background:#000;"></div>
<div style="left:44px;top:467px;width:2px;height:1px;background:#222;"></div>
<div style="left:57px;top:478px;width:561px;height:18px;background:#fcfcfc;"></div>
<div style="left:57px;top:478px;width:561px;height:1px;background:#dcdcdc;"></div>
<svg style="left:62px;top:482px;" width="11" height="10" viewBox="0 0 11 10"><path d="M9.900 0C6 .3 4 1.200 3 4.100H0L4.100 8.900 8.900 3.800H6.700C7.200 2.200 8.200 1 9.900 0z" fill="#333"/></svg>
<span style="left:75.7px;top:478.56px;font:400 10.8px/16px 'Liberation Sans',sans-serif;color:#333;letter-spacing:0.567px;">Report Footer</span>
<div style="left:38px;top:479px;width:12px;height:16px;background:#fbfbfb;border-right:1px solid #cfcfcf;border-bottom:1px solid #cfcfcf;"></div>
<div style="left:57px;top:496px;width:561px;height:40px;background:#fff;"></div>
<div style="left:59px;top:496px;width:559px;height:40px;background:linear-gradient(90deg,#333 1px,#fff 1px) 1px 0/4px 4px;"></div>
<div style="left:59px;top:496px;width:559px;height:40px;background:linear-gradient(transparent 1px,#fff 1px) 0 3px/4px 4px;"></div>
<div style="left:57px;top:495px;width:561px;height:1px;background:#000;"></div>
<div style="left:44px;top:506px;width:2px;height:1px;background:#222;"></div>
<div style="left:44px;top:518px;width:2px;height:1px;background:#222;"></div>
<div style="left:44px;top:530px;width:2px;height:1px;background:#222;"></div>
<div style="left:57px;top:536px;width:561px;height:1px;background:#000;"></div>
<div style="left:57px;top:320px;width:561px;height:0px;background:#111;"></div>
<div style="left:43px;top:542px;width:5px;height:1px;background:#111;"></div>
<div style="left:44px;top:554px;width:2px;height:1px;background:#222;"></div>
<div style="left:44px;top:566px;width:2px;height:1px;background:#222;"></div>
<div style="left:44px;top:578px;width:2px;height:1px;background:#222;"></div>
<span style="left:41.5px;top:586.01px;font:400 9.5px/14px 'Liberation Sans',sans-serif;color:#222;">1</span>
<div style="left:44px;top:602px;width:2px;height:1px;background:#222;"></div>
<div style="left:44px;top:614px;width:2px;height:1px;background:#222;"></div>
<div style="left:44px;top:626px;width:2px;height:1px;background:#222;"></div>
<div style="left:43px;top:638px;width:5px;height:1px;background:#111;"></div>
<svg style="left:41px;top:315px;" width="6" height="6" viewBox="0 0 6 6"><path d="M4 .5v5L1 3z" fill="#222"/></svg>
<div style="left:152px;top:223px;width:1px;height:97px;background:#3c3c3c;"></div>
<div style="left:248px;top:223px;width:1px;height:97px;background:#3c3c3c;"></div>
<div style="left:344px;top:223px;width:1px;height:97px;background:#3c3c3c;"></div>
<div style="left:440px;top:223px;width:1px;height:97px;background:#3c3c3c;"></div>
<div style="left:536px;top:223px;width:1px;height:97px;background:#3c3c3c;"></div>
<div style="left:152px;top:337px;width:1px;height:32px;background:#3c3c3c;"></div>
<div style="left:248px;top:337px;width:1px;height:32px;background:#3c3c3c;"></div>
<div style="left:344px;top:337px;width:1px;height:32px;background:#3c3c3c;"></div>
<div style="left:440px;top:337px;width:1px;height:32px;background:#3c3c3c;"></div>
<div style="left:536px;top:337px;width:1px;height:32px;background:#3c3c3c;"></div>
<div style="left:152px;top:386px;width:1px;height:53px;background:#3c3c3c;"></div>
<div style="left:248px;top:386px;width:1px;height:53px;background:#3c3c3c;"></div>
<div style="left:344px;top:386px;width:1px;height:53px;background:#3c3c3c;"></div>
<div style="left:440px;top:386px;width:1px;height:53px;background:#3c3c3c;"></div>
<div style="left:536px;top:386px;width:1px;height:53px;background:#3c3c3c;"></div>
<div style="left:152px;top:456px;width:1px;height:22px;background:#3c3c3c;"></div>
<div style="left:248px;top:456px;width:1px;height:22px;background:#3c3c3c;"></div>
<div style="left:344px;top:456px;width:1px;height:22px;background:#3c3c3c;"></div>
<div style="left:440px;top:456px;width:1px;height:22px;background:#3c3c3c;"></div>
<div style="left:536px;top:456px;width:1px;height:22px;background:#3c3c3c;"></div>
<div style="left:152px;top:495px;width:1px;height:41px;background:#3c3c3c;"></div>
<div style="left:248px;top:495px;width:1px;height:41px;background:#3c3c3c;"></div>
<div style="left:344px;top:495px;width:1px;height:41px;background:#3c3c3c;"></div>
<div style="left:440px;top:495px;width:1px;height:41px;background:#3c3c3c;"></div>
<div style="left:536px;top:495px;width:1px;height:41px;background:#3c3c3c;"></div>
<div style="left:76px;top:227px;width:44px;height:46px;border:1px solid #8e8e8e;background:transparent;"></div>
<div style="left:126px;top:227px;width:383px;height:46px;border:1px solid #8e8e8e;background:transparent;"></div>
<div style="left:72px;top:291px;width:45px;height:20px;border:1px solid #8e8e8e;background:transparent;"></div>
<div style="left:124px;top:287px;width:383px;height:29px;border:1px solid #8e8e8e;background:transparent;"></div>
<div style="left:515px;top:227px;width:103px;height:22px;border:1px solid #8e8e8e;border-right:none;box-sizing:border-box"></div>
<div style="left:515px;top:253px;width:103px;height:22px;border:1px solid #8e8e8e;border-right:none;box-sizing:border-box"></div>
<svg style="left:82px;top:235px;" width="32" height="32" viewBox="0 0 32 32"><defs><linearGradient id="gn" x1="0" y1="0" x2="1" y2="1"><stop offset="0" stop-color="#a8d0a0"/><stop offset=".5" stop-color="#7fb27c"/><stop offset="1" stop-color="#5d9a5e"/></linearGradient></defs><rect x="6.500" y="3.500" width="24" height="25" fill="#1c1c1c" opacity=".8"/><rect x="4.500" y="1.500" width="24" height="25" fill="url(#gn)" stroke="#5b8f5c" stroke-width="1"/><rect x="9.500" y="5.500" width="14" height="8" fill="#9dcb98" stroke="#5f9a60" stroke-width="1"/><path d="M2 4h4M2 7.500h4M2 11h4M2 14.500h4M2 18h4M2 21.500h4M2 25h4" stroke="#888" stroke-width="1.500"/></svg>
<span style="left:127.5px;top:224.62px;font:400 21.9px/33px 'DejaVu Sans',sans-serif;color:#596b1e;letter-spacing:-0.439px;-webkit-text-stroke:.3px #596b1e;">Albums by Artist</span>
<span style="left:73px;top:291.16px;font:400 14px/21px 'DejaVu Sans',sans-serif;color:#8d9c3c;letter-spacing:-0.173px;">Artist:</span>
<span style="left:126.5px;top:288.63px;font:400 18.4px/28px 'DejaVu Sans',sans-serif;color:#596b1e;letter-spacing:0.082px;-webkit-text-stroke:.3px #596b1e;">=[Reports]![Albums by Artist]![Which Art</span>
<div style="left:70px;top:341px;width:401px;height:24px;border:1px solid #8e8e8e;background:transparent;"></div>
<div style="left:497px;top:341px;width:121px;height:26px;border:1px solid #8e8e8e;border-right:none;box-sizing:border-box"></div>
<span style="left:74px;top:341.95px;font:400 14.3px/21px 'DejaVu Sans Condensed','DejaVu Sans',sans-serif;color:#8c8c8c;letter-spacing:-0.021px;">AlbumName</span>
<span style="left:501.5px;top:341.95px;font:400 14.3px/21px 'DejaVu Sans Condensed','DejaVu Sans',sans-serif;color:#8b90a2;letter-spacing:-0.187px;">Genre</span>
<div style="left:70px;top:398px;width:401px;height:27px;border:1px solid #8e8e8e;background:#fff;"></div>
<div style="left:497px;top:398px;width:121px;height:29px;border:1px solid #8e8e8e;border-right:none;box-sizing:border-box;background:#fff"></div>
<span style="left:75px;top:399.42px;font:400 17px/26px 'DejaVu Sans',sans-serif;color:#333;letter-spacing:-0.292px;">AlbumName</span>
<span style="left:502px;top:399.42px;font:400 17px/26px 'DejaVu Sans',sans-serif;color:#111;letter-spacing:-0.297px;">Genre</span>
<div style="left:320px;top:457px;width:241px;height:21px;background:#fff;border-left:1px solid #999;border-right:1px solid #999;width:239px;"></div>
<div style="left:321px;top:457px;width:239px;height:21px;overflow:hidden">
<span style="left:-7px;top:-0.17px;font:400 13.5px/20px 'DejaVu Sans',sans-serif;color:#555;letter-spacing:0.107px;">="Page " &amp; [Page] &amp; " of " &amp; [Pages</span>
</div>
<div style="left:56px;top:505px;width:430px;height:3.5px;background:#a3a3a3;"></div>
<div style="left:70px;top:508px;width:401px;height:24px;border:1px solid #8e8e8e;background:#fff;"></div>
<span style="left:75.2px;top:508.90px;font:400 15.6px/23px 'DejaVu Sans',sans-serif;color:#333;letter-spacing:-1.708px;">=Count(*)</span>
<div style="left:152px;top:456px;width:1px;height:22px;background:#3c3c3c;"></div>
<div style="left:248px;top:456px;width:1px;height:22px;background:#3c3c3c;"></div>
<div style="left:344px;top:456px;width:1px;height:22px;background:#3c3c3c;"></div>
<div style="left:440px;top:456px;width:1px;height:22px;background:#3c3c3c;"></div>
<div style="left:536px;top:456px;width:1px;height:22px;background:#3c3c3c;"></div>
<div style="left:618px;top:204px;width:17px;height:444px;background:#f1f1f1;"></div>
<div style="left:618px;top:183px;width:17px;height:481px;background:#f1f1f1;"></div>
<div style="left:619px;top:184px;width:13px;height:13px;border:1px solid #bdbdbd;background:#fff;"></div>
<svg style="left:622px;top:188px;" width="9" height="6" viewBox="0 0 9 6"><path d="M0.500 5.500h8L4.500 .5z" fill="#777"/></svg>
<div style="left:619px;top:630px;width:13px;height:13px;border:1px solid #bdbdbd;background:#fff;"></div>
<svg style="left:622px;top:635px;" width="9" height="6" viewBox="0 0 9 6"><path d="M0.500 .5h8L4.500 5.500z" fill="#666"/></svg>
<div style="left:619px;top:199px;width:15px;height:286px;background:#fff;border:1px solid #b4b4b4;border-top:2px solid #b0b0b0;width:13px;height:283px;"></div>
<div style="left:618px;top:647px;width:17px;height:17px;background:#c9c9c9;"></div>
<div style="left:36px;top:647px;width:582px;height:17px;background:#f1f1f1;"></div>
<div style="left:36px;top:648px;width:13px;height:13px;border:1px solid #bdbdbd;background:#fff;"></div>
<svg style="left:40.5px;top:651px;" width="6" height="9" viewBox="0 0 6 9"><path d="M5.500 .5v8L.5 4.500z" fill="#666"/></svg>
<div style="left:601px;top:648px;width:13px;height:13px;border:1px solid #bdbdbd;background:#fff;"></div>
<svg style="left:606px;top:651px;" width="6" height="9" viewBox="0 0 6 9"><path d="M.5 .5v8l5-4z" fill="#666"/></svg>
<div style="left:51px;top:648px;width:265px;height:13px;border:1px solid #b4b4b4;background:#fff;"></div>
<div style="left:636px;top:157px;width:306px;height:507px;background:#fff;"></div>
<div style="left:636px;top:157px;width:306px;height:1px;background:#d9d9d9;"></div>
<span style="left:649.5px;top:169.15px;font:400 21.5px/32px 'Liberation Sans',sans-serif;color:#a4373a;letter-spacing:-0.504px;-webkit-text-stroke:.55px #fff;">Object Dependencies</span>
<svg style="left:919px;top:176px;" width="11" height="11" viewBox="0 0 11 11"><path d="M1.500 1.500l8 8M9.500 1.500l-8 8" stroke="#444" stroke-width="1.800"/></svg>
<span style="left:652px;top:198.72px;font:400 11.5px/17px 'Liberation Sans',sans-serif;color:#2f5597;letter-spacing:0.262px;">Table: Albums</span>
<span style="left:888px;top:199.52px;font:400 11.5px/17px 'Liberation Sans',sans-serif;color:#2f5597;letter-spacing:-0.467px;">Refresh</span>
<svg style="left:666px;top:222px;" width="13" height="13" viewBox="0 0 13 13"><circle cx="6.500" cy="6.500" r="5.200" fill="#fff" stroke="#8a8a8a"/><circle cx="6.500" cy="6.500" r="2.700" fill="#5a5a5a"/></svg>
<svg style="left:666px;top:245px;" width="13" height="13" viewBox="0 0 13 13"><circle cx="6.500" cy="6.500" r="5.200" fill="#fff" stroke="#8a8a8a"/></svg>
<span style="left:688px;top:220.32px;font:400 11.5px/17px 'Liberation Sans',sans-serif;color:#262626;letter-spacing:0.197px;">Objects that depend on me</span>
<span style="left:688px;top:243.52px;font:400 11.5px/17px 'Liberation Sans',sans-serif;color:#262626;letter-spacing:0.133px;">Objects that I depend on</span>
<div style="left:649px;top:266px;width:262px;height:325px;overflow:hidden;">
<span style="left:4px;top:1.05px;font:400 11.7px/18px 'Liberation Sans',sans-serif;color:#262626;letter-spacing:0.030px;">Tables</span>
<svg style="left:7px;top:23px;" width="6" height="10" viewBox="0 0 6 10"><path d="M.5 .8v8l4.200-4z" fill="#fff" stroke="#888" stroke-width=".9"/></svg>
<svg style="left:24px;top:23.0px;" width="16" height="14" viewBox="0 0 16 14"><rect x=".5" y=".5" width="15" height="12.500" fill="#fff" stroke="#7088c0"/><rect x="1" y="1" width="14" height="2.500" fill="#7892cc"/><path d="M1 4h14M1 7h14M1 10h14M5.500 1v12M10.500 1v12" stroke="#9db3dd" stroke-width="1"/><path d="M.5 13h15" stroke="#3f5a94" stroke-width="1.200"/></svg>
<span style="left:60px;top:19.95px;font:400 11.7px/18px 'Liberation Sans',sans-serif;color:#262626;letter-spacing:0.071px;">Artists</span>
<svg style="left:6px;top:45.30000000000001px;" width="8" height="8" viewBox="0 0 8 8"><path d="M6.300 .2v6H.3z" fill="#2b2b2b"/></svg>
<svg style="left:24px;top:44.0px;" width="16" height="14" viewBox="0 0 16 14"><rect x=".5" y=".5" width="15" height="12.500" fill="#fff" stroke="#7088c0"/><rect x="1" y="1" width="14" height="2.500" fill="#7892cc"/><path d="M1 4h14M1 7h14M1 10h14M5.500 1v12M10.500 1v12" stroke="#9db3dd" stroke-width="1"/><path d="M.5 13h15" stroke="#3f5a94" stroke-width="1.200"/></svg>
<span style="left:60px;top:40.95px;font:400 11.7px/18px 'Liberation Sans',sans-serif;color:#262626;letter-spacing:-0.394px;">Genres</span>
<svg style="left:40px;top:65.0px;" width="16" height="14" viewBox="0 0 16 14"><rect x=".5" y=".5" width="15" height="12.500" fill="#fff" stroke="#7088c0"/><rect x="1" y="1" width="14" height="2.500" fill="#7892cc"/><path d="M1 4h14M1 7h14M1 10h14M5.500 1v12M10.500 1v12" stroke="#9db3dd" stroke-width="1"/><path d="M.5 13h15" stroke="#3f5a94" stroke-width="1.200"/></svg>
<span style="left:76.29999999999995px;top:62.25px;font:400 11.7px/18px 'Liberation Sans',sans-serif;color:#262626;letter-spacing:0.205px;">Table: Albums</span>
<svg style="left:22.799999999999955px;top:86.0px;" width="6" height="10" viewBox="0 0 6 10"><path d="M.5 .8v8l4.200-4z" fill="#fff" stroke="#888" stroke-width=".9"/></svg>
<svg style="left:40px;top:84.5px;" width="17" height="16" viewBox="0 0 17 16"><rect x="6.500" y=".5" width="9.500" height="10.500" fill="#fff" stroke="#8fa0b8"/><rect x="7" y="1" width="9" height="2.500" fill="#3f9a94"/><path d="M12 5.500h3M12 8h3" stroke="#6b86b8" stroke-width="1.200"/><rect x=".5" y="4" width="10.500" height="10.500" fill="#fff" stroke="#7f90ad"/><rect x="1" y="4.500" width="10" height="2.500" fill="#3f9a94"/><path d="M2 9h2.500M6 9h3.500M2 12h2.500M6 12h3.500" stroke="#5577b5" stroke-width="1.400"/></svg>
<span style="left:76.29999999999995px;top:82.95px;font:400 11.7px/18px 'Liberation Sans',sans-serif;color:#262626;letter-spacing:0.126px;">Query: Albums by date</span>
<svg style="left:22.799999999999955px;top:107.0px;" width="6" height="10" viewBox="0 0 6 10"><path d="M.5 .8v8l4.200-4z" fill="#fff" stroke="#888" stroke-width=".9"/></svg>
<svg style="left:40px;top:105.5px;" width="17" height="16" viewBox="0 0 17 16"><rect x="6.500" y=".5" width="9.500" height="10.500" fill="#fff" stroke="#8fa0b8"/><rect x="7" y="1" width="9" height="2.500" fill="#3f9a94"/><path d="M12 5.500h3M12 8h3" stroke="#6b86b8" stroke-width="1.200"/><rect x=".5" y="4" width="10.500" height="10.500" fill="#fff" stroke="#7f90ad"/><rect x="1" y="4.500" width="10" height="2.500" fill="#3f9a94"/><path d="M2 9h2.500M6 9h3.500M2 12h2.500M6 12h3.500" stroke="#5577b5" stroke-width="1.400"/></svg>
<span style="left:76.29999999999995px;top:103.95px;font:400 11.7px/18px 'Liberation Sans',sans-serif;color:#262626;letter-spacing:0.052px;">Query: Albums from the last 25 Years</span>
<svg style="left:22.799999999999955px;top:128.0px;" width="6" height="10" viewBox="0 0 6 10"><path d="M.5 .8v8l4.200-4z" fill="#fff" stroke="#888" stroke-width=".9"/></svg>
<svg style="left:40px;top:126.5px;" width="17" height="16" viewBox="0 0 17 16"><rect x="6.500" y=".5" width="9.500" height="10.500" fill="#fff" stroke="#8fa0b8"/><rect x="7" y="1" width="9" height="2.500" fill="#3f9a94"/><path d="M12 5.500h3M12 8h3" stroke="#6b86b8" stroke-width="1.200"/><rect x=".5" y="4" width="10.500" height="10.500" fill="#fff" stroke="#7f90ad"/><rect x="1" y="4.500" width="10" height="2.500" fill="#3f9a94"/><path d="M2 9h2.500M6 9h3.500M2 12h2.500M6 12h3.500" stroke="#5577b5" stroke-width="1.400"/></svg>
<span style="left:76.29999999999995px;top:124.95px;font:400 11.7px/18px 'Liberation Sans',sans-serif;color:#262626;letter-spacing:0.170px;">Query: Iron Maiden Albums</span>
<svg style="left:22.799999999999955px;top:149.5px;" width="6" height="10" viewBox="0 0 6 10"><path d="M.5 .8v8l4.200-4z" fill="#fff" stroke="#888" stroke-width=".9"/></svg>
<svg style="left:40px;top:148.5px;" width="16" height="15" viewBox="0 0 16 15"><rect x=".5" y=".5" width="14" height="13.500" fill="#fff" stroke="#6a7da3"/><rect x="1" y="1" width="13" height="2.200" fill="#dc5a73"/><path d="M.5 14h14" stroke="#3f5580" stroke-width="1.200"/><path d="M3 6.500h2.500M3 10.500h2.500" stroke="#4a68a8" stroke-width="1.300"/><rect x="7.300" y="5.300" width="4.500" height="2.400" fill="#e8eefa" stroke="#4a68a8" stroke-width=".9"/><rect x="7.300" y="9.300" width="4.500" height="2.400" fill="#e8eefa" stroke="#4a68a8" stroke-width=".9"/></svg>
<span style="left:76.29999999999995px;top:146.45px;font:400 11.7px/18px 'Liberation Sans',sans-serif;color:#262626;letter-spacing:0.236px;">Form: Albums</span>
<div style="left:33px;top:166.5px;width:174px;height:21px;background:#fbc3c6;"></div>
<svg style="left:22.799999999999955px;top:170px;" width="6" height="10" viewBox="0 0 6 10"><path d="M.5 .8v8l4.200-4z" fill="#fff" stroke="#888" stroke-width=".9"/></svg>
<svg style="left:39.5px;top:170px;" width="15" height="15" viewBox="0 0 15 15"><rect x="3" y="1" width="11.500" height="12.500" fill="#1d1d1d"/><rect x="2.500" y=".5" width="10.500" height="12" fill="#5e9a60" stroke="#39683c"/><rect x="5.500" y="2.500" width="5" height="3" fill="#86bd86" stroke="#4a7f4d" stroke-width=".6"/><path d="M.5 2h2.500M.5 4.300h2.500M.5 6.600h2.500M.5 8.900h2.500M.5 11.200h2.500" stroke="#222" stroke-width="1.100"/></svg>
<span style="left:76.29999999999995px;top:166.95px;font:400 11.7px/18px 'Liberation Sans',sans-serif;color:#262626;letter-spacing:0.173px;">Report: Albums by Artist</span>
<span style="left:4px;top:188.75px;font:400 11.7px/18px 'Liberation Sans',sans-serif;color:#262626;letter-spacing:-0.138px;">Queries</span>
<svg style="left:7px;top:210.0px;" width="6" height="10" viewBox="0 0 6 10"><path d="M.5 .8v8l4.200-4z" fill="#fff" stroke="#888" stroke-width=".9"/></svg>
<svg style="left:24px;top:208.5px;" width="17" height="16" viewBox="0 0 17 16"><rect x="6.500" y=".5" width="9.500" height="10.500" fill="#fff" stroke="#8fa0b8"/><rect x="7" y="1" width="9" height="2.500" fill="#3f9a94"/><path d="M12 5.500h3M12 8h3" stroke="#6b86b8" stroke-width="1.200"/><rect x=".5" y="4" width="10.500" height="10.500" fill="#fff" stroke="#7f90ad"/><rect x="1" y="4.500" width="10" height="2.500" fill="#3f9a94"/><path d="M2 9h2.500M6 9h3.500M2 12h2.500M6 12h3.500" stroke="#5577b5" stroke-width="1.400"/></svg>
<span style="left:60px;top:206.95px;font:400 11.7px/18px 'Liberation Sans',sans-serif;color:#262626;letter-spacing:0.258px;">Albums by Artist</span>
<svg style="left:7px;top:231.10000000000002px;" width="6" height="10" viewBox="0 0 6 10"><path d="M.5 .8v8l4.200-4z" fill="#fff" stroke="#888" stroke-width=".9"/></svg>
<svg style="left:24px;top:229.60000000000002px;" width="17" height="16" viewBox="0 0 17 16"><rect x="6.500" y=".5" width="9.500" height="10.500" fill="#fff" stroke="#8fa0b8"/><rect x="7" y="1" width="9" height="2.500" fill="#3f9a94"/><path d="M12 5.500h3M12 8h3" stroke="#6b86b8" stroke-width="1.200"/><rect x=".5" y="4" width="10.500" height="10.500" fill="#fff" stroke="#7f90ad"/><rect x="1" y="4.500" width="10" height="2.500" fill="#3f9a94"/><path d="M2 9h2.500M6 9h3.500M2 12h2.500M6 12h3.500" stroke="#5577b5" stroke-width="1.400"/></svg>
<span style="left:60px;top:228.05px;font:400 11.7px/18px 'Liberation Sans',sans-serif;color:#262626;letter-spacing:0.169px;">Albums by date</span>
<svg style="left:7px;top:252.0px;" width="6" height="10" viewBox="0 0 6 10"><path d="M.5 .8v8l4.200-4z" fill="#fff" stroke="#888" stroke-width=".9"/></svg>
<svg style="left:24px;top:250.5px;" width="17" height="16" viewBox="0 0 17 16"><rect x="6.500" y=".5" width="9.500" height="10.500" fill="#fff" stroke="#8fa0b8"/><rect x="7" y="1" width="9" height="2.500" fill="#3f9a94"/><path d="M12 5.500h3M12 8h3" stroke="#6b86b8" stroke-width="1.200"/><rect x=".5" y="4" width="10.500" height="10.500" fill="#fff" stroke="#7f90ad"/><rect x="1" y="4.500" width="10" height="2.500" fill="#3f9a94"/><path d="M2 9h2.500M6 9h3.500M2 12h2.500M6 12h3.500" stroke="#5577b5" stroke-width="1.400"/></svg>
<span style="left:60px;top:248.95px;font:400 11.7px/18px 'Liberation Sans',sans-serif;color:#262626;letter-spacing:0.054px;">Albums from the last 25 Years</span>
<svg style="left:7px;top:273.0px;" width="6" height="10" viewBox="0 0 6 10"><path d="M.5 .8v8l4.200-4z" fill="#fff" stroke="#888" stroke-width=".9"/></svg>
<svg style="left:24px;top:271.5px;" width="17" height="16" viewBox="0 0 17 16"><rect x="6.500" y=".5" width="9.500" height="10.500" fill="#fff" stroke="#8fa0b8"/><rect x="7" y="1" width="9" height="2.500" fill="#3f9a94"/><path d="M12 5.500h3M12 8h3" stroke="#6b86b8" stroke-width="1.200"/><rect x=".5" y="4" width="10.500" height="10.500" fill="#fff" stroke="#7f90ad"/><rect x="1" y="4.500" width="10" height="2.500" fill="#3f9a94"/><path d="M2 9h2.500M6 9h3.500M2 12h2.500M6 12h3.500" stroke="#5577b5" stroke-width="1.400"/></svg>
<span style="left:60px;top:269.95px;font:400 11.7px/18px 'Liberation Sans',sans-serif;color:#262626;letter-spacing:0.256px;">Iron Maiden Albums</span>
<span style="left:4px;top:292.05px;font:400 11.7px/18px 'Liberation Sans',sans-serif;color:#262626;letter-spacing:-0.029px;">Forms</span>
<svg style="left:7px;top:313px;" width="6" height="10" viewBox="0 0 6 10"><path d="M.5 .8v8l4.200-4z" fill="#fff" stroke="#888" stroke-width=".9"/></svg>
<svg style="left:24px;top:312.5px;" width="16" height="15" viewBox="0 0 16 15"><rect x=".5" y=".5" width="14" height="13.500" fill="#fff" stroke="#6a7da3"/><rect x="1" y="1" width="13" height="2.200" fill="#dc5a73"/><path d="M.5 14h14" stroke="#3f5580" stroke-width="1.200"/><path d="M3 6.500h2.500M3 10.500h2.500" stroke="#4a68a8" stroke-width="1.300"/><rect x="7.300" y="5.300" width="4.500" height="2.400" fill="#e8eefa" stroke="#4a68a8" stroke-width=".9"/><rect x="7.300" y="9.300" width="4.500" height="2.400" fill="#e8eefa" stroke="#4a68a8" stroke-width=".9"/></svg>
<span style="left:60px;top:309.95px;font:400 11.7px/18px 'Liberation Sans',sans-serif;color:#262626;letter-spacing:0.331px;">Albums</span>
</div>
<div style="left:911px;top:268px;width:15px;height:321px;background:#f3f3f3;"></div>
<div style="left:911px;top:268px;width:13px;height:13px;border:1px solid #bdbdbd;background:#fff;"></div>
<svg style="left:914px;top:272px;" width="9" height="6" viewBox="0 0 9 6"><path d="M0.500 5.500h8L4.500 .5z" fill="#666"/></svg>
<div style="left:911px;top:282px;width:15px;height:254px;background:#efefef;border:1px solid #adadad;border-top:2px solid #a8a8a8;width:13px;height:251px;"></div>
<div style="left:911px;top:573px;width:13px;height:13px;border:1px solid #bdbdbd;background:#fff;"></div>
<svg style="left:914px;top:578px;" width="9" height="6" viewBox="0 0 9 6"><path d="M0.500 .5h8L4.500 5.500z" fill="#555"/></svg>
<div style="left:652px;top:591px;width:257px;height:15px;background:#f0f0f0;"></div>
<div style="left:652px;top:591px;width:13px;height:13px;border:1px solid #bdbdbd;background:#fff;"></div>
<svg style="left:657px;top:594px;" width="6" height="9" viewBox="0 0 6 9"><path d="M5.500 .5v8L.5 4.500z" fill="#555"/></svg>
<div style="left:894px;top:591px;width:13px;height:13px;border:1px solid #bdbdbd;background:#fff;"></div>
<svg style="left:899px;top:594px;" width="6" height="9" viewBox="0 0 6 9"><path d="M.5 .5v8l5-4z" fill="#555"/></svg>
<div style="left:681px;top:591px;width:201px;height:13px;border:1px solid #a9a9a9;background:#fff;"></div>
<span style="left:650.6px;top:609.55px;font:400 11.7px/18px 'Liberation Sans',sans-serif;color:#262626;letter-spacing:-0.016px;">Help</span>
<div style="left:649px;top:628.5px;width:280px;height:1.2px;background:#111;"></div>
<svg style="left:648px;top:633px;" width="18" height="18" viewBox="0 0 18 18"><circle cx="9" cy="8.500" r="8" fill="#3a6eb5"/></svg>
<span style="left:653.5px;top:631.50px;font:700 13px/20px 'Liberation Sans',sans-serif;color:#fff;">?</span>
<span style="left:676.6px;top:633.05px;font:400 11.7px/18px 'Liberation Sans',sans-serif;color:#2f5597;letter-spacing:0.002px;">Things that cause dependencies</span>
<div style="left:0px;top:664px;width:942px;height:21px;background:#f1f1f1;"></div>
<div style="left:0px;top:664px;width:942px;height:1px;background:#c6c6c6;"></div>
<span style="left:8px;top:666.52px;font:400 11.5px/17px 'Liberation Sans',sans-serif;color:#444;letter-spacing:-0.064px;">Design View</span>
<div style="left:903px;top:665px;width:39px;height:20px;background:#c8c8c8;"></div>
<svg style="left:800px;top:667px;" width="16" height="16" viewBox="0 0 16 16"><path d="M4.500 1.500h10v13h-10M4.500 1.500v3M4.500 11.500v3M1 5.500h5M1 10.500h5M3.500 5.500v5" fill="none" stroke="#555" stroke-width="1.200"/></svg>
<svg style="left:838px;top:667px;" width="17" height="16" viewBox="0 0 17 16"><path d="M12.500 7V2.500h-11v10h6" fill="none" stroke="#555" stroke-width="1.200"/><path d="M1.500 3.500h11" stroke="#555" stroke-width="2"/><circle cx="11" cy="11" r="2.500" fill="none" stroke="#555" stroke-width="1.200"/><path d="M13 13l2 2" stroke="#555" stroke-width="1.400"/></svg>
<svg style="left:877px;top:667px;" width="15" height="16" viewBox="0 0 15 16"><path d="M3.500 1.500v13M11.500 1.500v13M1 2.500h13M3.500 6h8M3.500 9.500h8M1 13.500h13" fill="none" stroke="#555" stroke-width="1.200"/></svg>
<svg style="left:915px;top:666px;" width="16" height="17" viewBox="0 0 16 17"><path d="M1.500 2v8h3M1.500 6l3-2" fill="none" stroke="#555" stroke-width="1.200"/><path d="M6 10l8-8" stroke="#555" stroke-width="2.400"/><path d="M1 12.500h14v3.500H1zM4 12.500v2M7 12.500v2M10 12.500v2M13 12.500v2" fill="none" stroke="#555" stroke-width="1"/></svg>
<div style="left:0px;top:684.5px;width:942px;height:3px;background:#1c1c1c;"></div>
<svg style="left:480px;top:340px;" width="200" height="110" viewBox="0 0 200 110"><polygon points="5.500,28.200 74.800,6.900 76.500,13.200 33.600,33.100 190.500,93.200 187,103.900 33,45.200 46.700,87 41.600,89.600" fill="#ff980a"/></svg>
</body></html>
